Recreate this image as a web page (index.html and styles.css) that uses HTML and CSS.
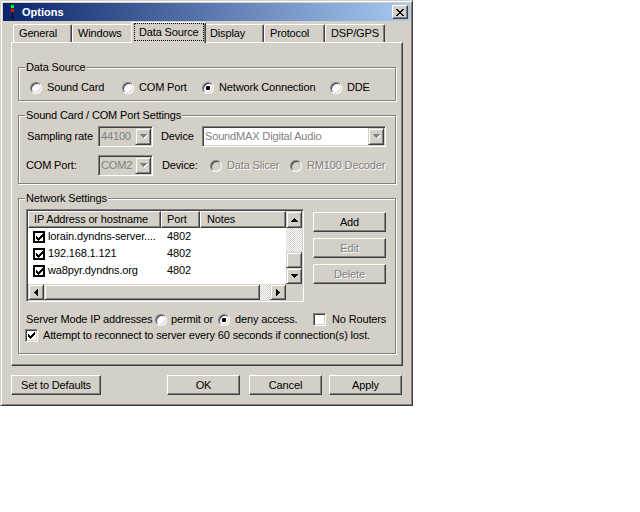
FILE: index.html
```html
<!DOCTYPE html>
<html>
<head>
<meta charset="utf-8">
<title>Options</title>
<link rel="stylesheet" href="styles.css">
</head>
<body>
<div class="window">
  <div class="titlebar">
    <svg class="appicon" width="6" height="14" viewBox="0 0 6 14" shape-rendering="crispEdges">
      <rect x="1" y="0" width="3" height="3" fill="#00ff00"/>
      <rect x="1" y="4" width="3" height="3" fill="#ff0000"/>
      <rect x="2" y="7" width="1" height="6" fill="#000"/>
      <rect x="1" y="12" width="3" height="1" fill="#000"/>
    </svg>
    <span class="title">Options</span>
    <div class="close">
      <svg width="8" height="7" viewBox="0 0 8 7" shape-rendering="crispEdges"><path d="M0 0h2v1H0z M6 0h2v1H6z M1 1h2v1H1z M5 1h2v1H5z M2 2h4v1H2z M3 3h2v1H3z M2 4h4v1H2z M1 5h2v1H1z M5 5h2v1H5z M0 6h2v1H0z M6 6h2v1H6z"/></svg>
    </div>
  </div>

  <div class="tabs">
    <div class="tab t-general">General</div>
    <div class="tab t-windows">Windows</div>
    <div class="tab t-source active"><span class="focus">Data Source</span></div>
    <div class="tab t-display">Display</div>
    <div class="tab t-protocol">Protocol</div>
    <div class="tab t-dsp">DSP/GPS</div>
  </div>

  <div class="panel">
    <fieldset class="group g-source">
      <legend>Data Source</legend>
      <div class="radios">
        <div class="opt o-sound"><span class="radio"></span>Sound Card</div>
        <div class="opt o-com"><span class="radio"></span>COM Port</div>
        <div class="opt o-net"><span class="radio on"></span>Network Connection</div>
        <div class="opt"><span class="radio"></span>DDE</div>
      </div>
    </fieldset>

    <fieldset class="group g-sound">
      <legend>Sound Card / COM Port Settings</legend>
      <div class="crow">
        <span class="l-rate l-first">Sampling rate</span>
        <div class="combo c-small">
          <span class="ctext">44100</span>
          <span class="cbtn"><svg width="8" height="5" viewBox="0 0 8 5" shape-rendering="crispEdges"><path transform="translate(1,1)" fill="#fff" d="M0 0h7v1H6v1H5v1H4v1H3V3H2V2H1V1H0z"/><path fill="#808080" d="M0 0h7v1H6v1H5v1H4v1H3V3H2V2H1V1H0z"/></svg></span>
        </div>
        <span class="l-dev">Device</span>
        <div class="combo c-wide">
          <span class="ctext">SoundMAX Digital Audio</span>
          <span class="cbtn"><svg width="8" height="5" viewBox="0 0 8 5" shape-rendering="crispEdges"><path transform="translate(1,1)" fill="#fff" d="M0 0h7v1H6v1H5v1H4v1H3V3H2V2H1V1H0z"/><path fill="#808080" d="M0 0h7v1H6v1H5v1H4v1H3V3H2V2H1V1H0z"/></svg></span>
        </div>
      </div>
      <div class="crow r2">
        <span class="l-rate">COM Port:</span>
        <div class="combo c-small">
          <span class="ctext">COM2</span>
          <span class="cbtn"><svg width="8" height="5" viewBox="0 0 8 5" shape-rendering="crispEdges"><path transform="translate(1,1)" fill="#fff" d="M0 0h7v1H6v1H5v1H4v1H3V3H2V2H1V1H0z"/><path fill="#808080" d="M0 0h7v1H6v1H5v1H4v1H3V3H2V2H1V1H0z"/></svg></span>
        </div>
        <span class="l-dev2">Device:</span>
        <div class="opt disabled o-slicer"><span class="radio"></span>Data Slicer</div>
        <div class="opt disabled"><span class="radio"></span>RM100 Decoder</div>
      </div>
    </fieldset>

    <fieldset class="group g-net">
      <legend>Network Settings</legend>
      <div class="net-top">
        <div class="listview">
          <div class="lv-body">
            <div class="lv-header">
              <div class="hcol c-ip">IP Address or hostname</div>
              <div class="hcol c-port">Port</div>
              <div class="hcol c-notes">Notes</div>
            </div>
            <div class="lv-row">
              <div class="cell c-ip"><span class="lvcheck"><svg width="7" height="7" viewBox="0 0 7 7" shape-rendering="crispEdges"><path d="M0 2h1v3H0z M1 3h1v3H1z M2 4h1v3H2z M3 3h1v3H3z M4 2h1v3H4z M5 1h1v3H5z M6 0h1v3H6z"/></svg></span>lorain.dyndns-server....</div>
              <div class="cell c-port">4802</div>
              <div class="cell c-notes"></div>
            </div>
            <div class="lv-row">
              <div class="cell c-ip"><span class="lvcheck"><svg width="7" height="7" viewBox="0 0 7 7" shape-rendering="crispEdges"><path d="M0 2h1v3H0z M1 3h1v3H1z M2 4h1v3H2z M3 3h1v3H3z M4 2h1v3H4z M5 1h1v3H5z M6 0h1v3H6z"/></svg></span>192.168.1.121</div>
              <div class="cell c-port">4802</div>
              <div class="cell c-notes"></div>
            </div>
            <div class="lv-row">
              <div class="cell c-ip"><span class="lvcheck"><svg width="7" height="7" viewBox="0 0 7 7" shape-rendering="crispEdges"><path d="M0 2h1v3H0z M1 3h1v3H1z M2 4h1v3H2z M3 3h1v3H3z M4 2h1v3H4z M5 1h1v3H5z M6 0h1v3H6z"/></svg></span>wa8pyr.dyndns.org</div>
              <div class="cell c-port">4802</div>
              <div class="cell c-notes"></div>
            </div>
          </div>
          <div class="vscroll">
            <div class="sbtn s-up"><svg width="7" height="4" viewBox="0 0 7 4" shape-rendering="crispEdges"><path d="M3 0h1v1h1v1h1v1h1v1H0V3h1V2h1V1h1z"/></svg></div>
            <div class="track"></div>
            <div class="sbtn s-thumb"></div>
            <div class="sbtn s-down"><svg width="7" height="4" viewBox="0 0 7 4" shape-rendering="crispEdges"><path d="M0 0h7v1H6v1H5v1H4v1H3V3H2V2H1V1H0z"/></svg></div>
          </div>
          <div class="hscroll">
            <div class="sbtn s-left"><svg width="4" height="7" viewBox="0 0 4 7" shape-rendering="crispEdges"><path d="M3 0h1v7H3V6H2V5H1V4H0V3h1V2h1V1h1z"/></svg></div>
            <div class="sbtn s-hthumb"></div>
            <div class="track"></div>
            <div class="sbtn s-right"><svg width="4" height="7" viewBox="0 0 4 7" shape-rendering="crispEdges"><path d="M0 0h1v1h1v1h1v1h1v1H3v1H2v1H1v1H0z"/></svg></div>
          </div>
          <div class="corner"></div>
        </div>
        <div class="side">
          <button class="btn">Add</button>
          <button class="btn disabled">Edit</button>
          <button class="btn disabled">Delete</button>
        </div>
      </div>
      <div class="server">
        <span class="s-label">Server Mode IP addresses</span>
        <div class="opt o-permit"><span class="radio"></span>permit or</div>
        <div class="opt o-deny"><span class="radio on"></span>deny access.</div>
        <div class="opt o-chk"><span class="check"></span>No Routers</div>
      </div>
      <div class="attempt">
        <span class="check"><svg width="7" height="7" viewBox="0 0 7 7" shape-rendering="crispEdges"><path d="M0 2h1v3H0z M1 3h1v3H1z M2 4h1v3H2z M3 3h1v3H3z M4 2h1v3H4z M5 1h1v3H5z M6 0h1v3H6z"/></svg></span>
        <span>Attempt to reconnect to server every 60 seconds if connection(s) lost.</span>
      </div>
    </fieldset>
  </div>

  <div class="footer">
    <button class="btn b-defaults">Set to Defaults</button>
    <button class="btn b-ok">OK</button>
    <button class="btn b-cancel">Cancel</button>
    <button class="btn">Apply</button>
  </div>
</div>
</body>
</html>
```

FILE: styles.css
```css
* { box-sizing: border-box; }

body {
  margin: 0;
  background: #fff;
  font-family: "Liberation Sans", Arial, sans-serif;
  font-size: 11px;
  line-height: 13px;
  letter-spacing: -0.15px;
  color: #000;
}

.window {
  width: 413px;
  height: 406px;
  background: #D4D0C8;
  border: 1px solid;
  border-color: #D4D0C8 #404040 #404040 #D4D0C8;
  box-shadow: inset 1px 1px #fff, inset -1px -1px #808080;
  padding: 2px;
  display: flex;
  flex-direction: column;
}

/* title bar */
.titlebar {
  height: 18px;
  flex-shrink: 0;
  display: flex;
  align-items: center;
  background: linear-gradient(to right, #0A246A, #A6CAF0);
}
.appicon { display: block; margin-left: 7px; }
.title { margin-left: 6px; color: #fff; font-weight: bold; letter-spacing: 0; }
.close {
  margin-left: auto;
  margin-right: 2px;
  width: 16px;
  height: 14px;
  background: #D4D0C8;
  border: 1px solid;
  border-color: #fff #404040 #404040 #fff;
  box-shadow: inset -1px -1px #808080;
  display: flex;
  align-items: center;
  justify-content: center;
}
.close svg { display: block; }

/* tabs */
.tabs {
  height: 20px;
  flex-shrink: 0;
  margin: 1px 0 0 8px;
  padding-left: 2px;
  display: flex;
  align-items: flex-end;
}
.tab {
  height: 18px;
  border: 1px solid;
  border-bottom: 0;
  border-color: #fff #404040 transparent #fff;
  box-shadow: inset -1px 0 #808080;
  border-radius: 2px 2px 0 0;
  padding-left: 5px;
  display: flex;
  align-items: center;
  white-space: nowrap;
  background: #D4D0C8;
}
.t-general { width: 59px; }
.t-windows { width: 61px; }
.t-source { width: 75px; }
.t-display { width: 60px; }
.t-protocol { width: 61px; }
.t-dsp { width: 60px; }
.tab.active {
  height: 21px;
  margin: 0 -2px -1px;
  padding: 0 0 2px 0;
  align-items: stretch;
  position: relative;
  z-index: 1;
}
.focus {
  flex: 1;
  margin: 0 1px 0 2px;
  padding-left: 4px;
  border: 1px dotted #000;
  display: flex;
  align-items: center;
}

/* panel */
.panel {
  height: 324px;
  flex-shrink: 0;
  margin: 0 7px 0 8px;
  padding-left: 6px;
  border: 1px solid;
  border-color: #fff #404040 #404040 #fff;
  box-shadow: inset -1px -1px #808080;
}

.group {
  width: 378px;
  min-width: 0;
  margin: 8px 0 0;
  padding: 0 0 0 7px;
  border: 1px solid #808080;
  box-shadow: inset 1px 1px #fff, 1px 1px #fff;
}
.group legend {
  padding: 0 1px;
  margin-left: -1px;
  line-height: 13px;
  background: #D4D0C8;
}
.g-source { margin-top: 18px; padding-top: 7px; padding-bottom: 6px; }
.g-sound { padding-top: 4px; padding-bottom: 7px; }
.g-net { padding-top: 4px; padding-bottom: 11px; }

/* radios & checks */
.radios { display: flex; height: 13px; margin-left: 4px; }
.opt { display: flex; align-items: center; gap: 5px; white-space: nowrap; }
.o-sound { width: 92px; }
.o-com { width: 80px; }
.o-net { width: 128px; }

.radio {
  flex-shrink: 0;
  width: 12px;
  height: 12px;
  border-radius: 50%;
  border: 1px solid;
  border-color: #808080 #fff #fff #808080;
  box-shadow: inset 1px 1px #404040, inset -1px -1px #D4D0C8;
  background: #fff;
  display: flex;
  align-items: center;
  justify-content: center;
}
.radio.on::after {
  content: "";
  width: 4px;
  height: 4px;
  border-radius: 1px;
  background: #000;
}
.disabled { color: #808080; text-shadow: 1px 1px 0 #fff; }
.opt.disabled .radio { background: #D4D0C8; }

.check {
  flex-shrink: 0;
  width: 13px;
  height: 13px;
  border: 1px solid;
  border-color: #808080 #fff #fff #808080;
  box-shadow: inset 1px 1px #404040, inset -1px -1px #D4D0C8;
  background: #fff;
  display: flex;
  align-items: center;
  justify-content: center;
}
.check svg { display: block; }

/* sound card group */
.crow { display: flex; align-items: center; height: 21px; }
.r2 { margin-top: 8px; }
.l-rate { width: 72px; white-space: nowrap; }
.l-first { padding-left: 1px; }
.l-dev { margin-left: 8px; width: 41px; }
.l-dev2 { margin-left: 9px; width: 48px; }
.o-slicer { width: 80px; }

.combo {
  display: flex;
  height: 21px;
  padding: 1px;
  border: 1px solid;
  border-color: #808080 #fff #fff #808080;
  box-shadow: inset 1px 1px #404040, inset -1px -1px #D4D0C8;
  background: #fff;
}
.c-small { width: 55px; background: #D4D0C8; }
.c-wide { width: 184px; }
.ctext {
  flex: 1;
  padding-left: 1px;
  color: #808080;
  display: flex;
  align-items: center;
  overflow: hidden;
  white-space: nowrap;
}
.cbtn {
  width: 16px;
  border: 1px solid;
  border-color: #D4D0C8 #404040 #404040 #D4D0C8;
  box-shadow: inset 1px 1px #fff, inset -1px -1px #808080;
  background: #D4D0C8;
  display: flex;
  align-items: center;
  justify-content: center;
}
.cbtn svg { display: block; margin-left: 1px; }

/* network group */
.net-top { display: flex; }
.listview {
  width: 278px;
  height: 93px;
  padding: 1px;
  border: 1px solid;
  border-color: #808080 #fff #fff #808080;
  box-shadow: inset 1px 1px #404040, inset -1px -1px #D4D0C8;
  background: #fff;
  display: grid;
  grid-template-columns: 258px 16px;
  grid-template-rows: 73px 16px;
}
.lv-body { overflow: hidden; }
.lv-header { display: flex; height: 17px; }
.hcol {
  height: 17px;
  background: #D4D0C8;
  border: 1px solid;
  border-color: #fff #404040 #404040 #fff;
  box-shadow: inset -1px -1px #808080;
  padding-left: 5px;
  display: flex;
  align-items: center;
  white-space: nowrap;
}
.c-ip { width: 133px; }
.c-port { width: 39px; }
.c-notes { width: 86px; }
.hcol.c-notes { padding-left: 6px; }

.lv-row { display: flex; height: 17px; }
.cell { display: flex; align-items: center; white-space: nowrap; overflow: hidden; }
.cell.c-ip { padding-left: 5px; gap: 3px; }
.cell.c-port { padding-left: 6px; }
.lvcheck {
  flex-shrink: 0;
  width: 12px;
  height: 12px;
  border: 2px solid #000;
  background: #fff;
  padding: 1px 0 0 1px;
}
.lvcheck svg { display: block; }

.vscroll { display: flex; flex-direction: column; }
.hscroll { display: flex; }
.sbtn {
  flex-shrink: 0;
  background: #D4D0C8;
  border: 1px solid;
  border-color: #D4D0C8 #404040 #404040 #D4D0C8;
  box-shadow: inset 1px 1px #fff, inset -1px -1px #808080;
  display: flex;
  align-items: center;
  justify-content: center;
}
.sbtn svg { display: block; }
.s-up { height: 17px; }
.s-thumb, .s-down { height: 16px; }
.s-left, .s-right { width: 16px; }
.s-hthumb { width: 216px; }
.track {
  flex: 1;
  background: repeating-conic-gradient(#fff 0 25%, #D4D0C8 0 50%) 0 0 / 2px 2px;
}
.corner { background: #D4D0C8; }

.side {
  margin-left: 9px;
  padding-top: 3px;
  display: flex;
  flex-direction: column;
  gap: 6px;
}

.btn {
  width: 73px;
  height: 20px;
  padding: 0;
  margin: 0;
  font: inherit;
  letter-spacing: inherit;
  color: #000;
  background: #D4D0C8;
  border: 1px solid;
  border-color: #fff #404040 #404040 #fff;
  box-shadow: inset -1px -1px #808080;
  text-align: center;
}
.btn.disabled { color: #808080; text-shadow: 1px 1px 0 #fff; }

.server { display: flex; align-items: center; height: 13px; margin-top: 11px; }
.s-label { width: 129px; white-space: nowrap; }
.o-permit { width: 63px; gap: 4px; }
.o-deny { width: 95px; }
.o-chk { gap: 6px; }

.attempt {
  display: flex;
  align-items: center;
  gap: 5px;
  height: 13px;
  margin: 3px 0 0 -1px;
  white-space: nowrap;
}

/* footer */
.footer {
  display: flex;
  margin-top: 9px;
  padding: 0 8px;
}
.b-defaults { width: 90px; margin-right: auto; }
.b-ok { margin-right: 9px; }
.b-cancel { margin-right: 7px; }
```
